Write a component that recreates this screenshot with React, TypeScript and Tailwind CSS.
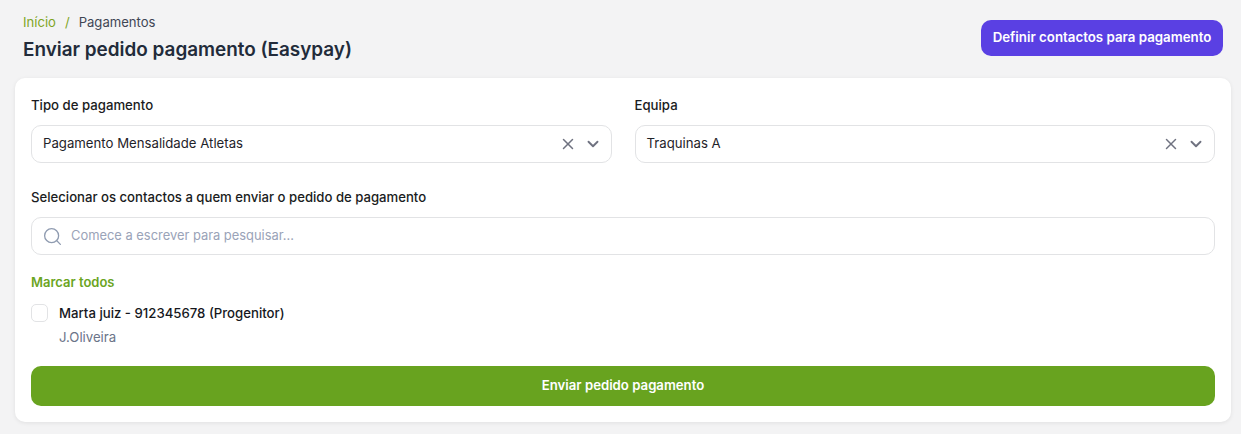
import React from 'react';
import { ChevronDown, Search, X } from 'lucide-react';

const SelectField = ({ label, value }: { label: string; value: string }) => (
  <div className="flex-1">
    <label className="block h-[21px] text-[13.2px] leading-[21px] font-medium text-[#1a1c21]">{label}</label>
    <div className="mt-[9px] h-[38px] flex items-center pl-[11px] pr-[9px] bg-white border border-[#e2e3e5] rounded-[10px]">
      <span className="flex-1 text-[13.2px] leading-[35px] pb-[1px] text-[#1f2329]">{value}</span>
      <X size={18} strokeWidth={2} className="text-[#6f7280]" />
      <ChevronDown size={18} strokeWidth={2.5} className="ml-[7px] text-[#6f7280]" />
    </div>
  </div>
);

export default function App() {
  return (
    <div className="h-[434px] bg-[#f3f3f4] pl-[15px] pr-[10px] pt-[12px] overflow-hidden font-['Inter','Noto_Sans',sans-serif]">
      <header className="h-[66px] flex justify-between pl-2 pr-2">
        <div>
          <nav className="flex items-center h-[21px] text-[13.1px] text-[#3f4654]">
            <span className="text-[#7fa51f]">Início</span>
            <span className="mx-[9px] text-[#7fa51f]">/</span>
            <span>Pagamentos</span>
          </nav>
          <h1 className="mt-[4px] text-[18.9px] leading-[26px] font-semibold text-[#222b3a]">Enviar pedido pagamento (Easypay)</h1>
        </div>
        <button className="mt-2 h-9 w-[242px] rounded-[10px] bg-[#5a40e3] text-[13.3px] font-semibold text-white">
          Definir contactos para pagamento
        </button>
      </header>

      <main className="h-[344px] px-4 pt-[17px] bg-white rounded-[10px] shadow-[0_1px_4px_rgba(0,0,0,0.08)]">
        <div className="flex gap-[23px]">
          <SelectField label="Tipo de pagamento" value="Pagamento Mensalidade Atletas" />
          <SelectField label="Equipa" value="Traquinas A" />
        </div>

        <label className="block mt-[24px] h-[21px] text-[13.15px] leading-[21px] font-medium text-[#1a1c21]">
          Selecionar os contactos a quem enviar o pedido de pagamento
        </label>
        <div className="mt-[9px] h-[38px] flex items-center gap-2 pl-[10px] bg-white border border-[#e2e3e5] rounded-[10px]">
          <Search size={21} strokeWidth={1.5} className="text-[#8f9bb0]" />
          <span className="text-[12.9px] text-[#9aa3b8]">Comece a escrever para pesquisar...</span>
        </div>

        <div className="mt-[17px] h-[21px] text-[13px] leading-[21px] font-semibold text-[#6ba51f]">Marcar todos</div>

        <div className="mt-[10px] flex gap-[11px]">
          <div className="mt-[1px] w-[17px] h-[18px] bg-white border border-[#e2e3e5] rounded-[5px]" />
          <div>
            <div className="h-[21px] text-[13.2px] leading-[21px] font-medium text-[#16181d]">Marta juiz - 912345678 (Progenitor)</div>
            <div className="mt-[3px] h-[21px] text-[13.2px] leading-[21px] text-[#6b7488]">J.Oliveira</div>
          </div>
        </div>

        <button className="mt-[18px] w-full h-10 rounded-[10px] bg-[#68a31f] text-[13.2px] font-semibold text-white">
          Enviar pedido pagamento
        </button>
      </main>
    </div>
  );
}
